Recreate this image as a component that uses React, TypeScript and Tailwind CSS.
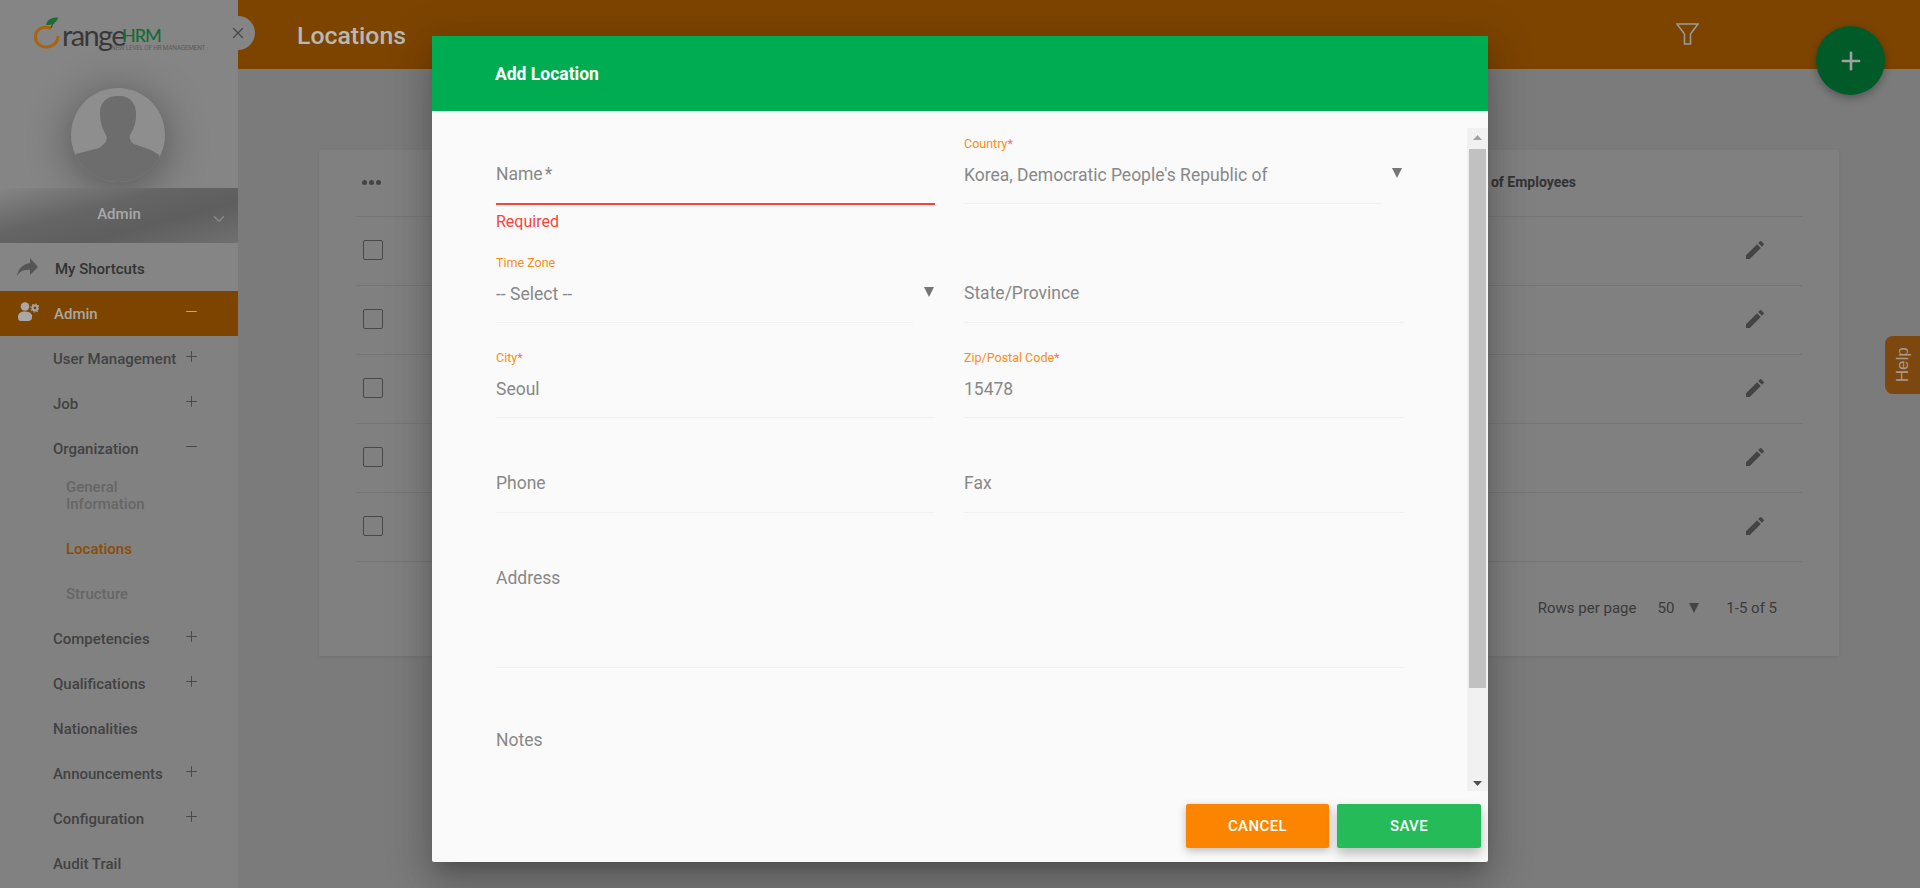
import type { ReactNode } from 'react';
import { Minus, Plus, X, ChevronDown } from 'lucide-react';
import { MdEdit } from 'react-icons/md';

function Logo() {
  return (
    <div className="relative h-[69px] w-full">
      <svg className="absolute left-[32px] top-[14px]" width="32" height="36" viewBox="0 0 32 36">
        <path d="M19 14.5 C12 11.5 3.5 14.5 3.5 23 C3.5 29.5 8.5 33 14.5 33 C21 33 26 28.5 26 22" fill="none" stroke="#a86510" strokeWidth="3" />
        <path d="M19 14 C19.5 11 20.5 9.5 22 8.5" fill="none" stroke="#4a4a3a" strokeWidth="1.5" />
        <path d="M14 11 C15 5 21 3 26 3.5 C25.5 8 20 11.5 14 11 Z" fill="#1d6b38" />
      </svg>
      <span className="absolute left-[62px] top-[25px] text-[29px] leading-[20px] tracking-[-1.6px] text-[#383838] font-['Lato',sans-serif]">range</span>
      <span className="absolute left-[122px] top-[28px] text-[18px] leading-[14px] tracking-[-1.1px] font-medium text-[#146b38] font-['Lato',sans-serif]">HRM</span>
      <span className="absolute left-[111px] top-[45px] text-[6.5px] leading-[6px] tracking-[-0.25px] whitespace-nowrap text-[#5c5c5c]">NEW LEVEL OF HR MANAGEMENT</span>
    </div>
  );
}

function Avatar() {
  return (
    <div className="flex h-[119px] justify-center pr-[2px] pt-[19px]">
      <div className="h-[94px] w-[94px] overflow-hidden rounded-full bg-[#8e8e8e] shadow-[0_6px_44px_rgba(0,0,0,0.38)]">
        <svg width="94" height="94" viewBox="0 0 94 94">
          <path
            d="M47 8 C58 7 66 15 65 28 C65 36 62 42 59 47 C58 51 60 54 63 56 L80 62 L88 67 L94 94 L0 94 L5 66 L28 60 C35 55 37 52 35 47 C32 42 29 35 29 25 C29 14 36 8 47 8 Z"
            fill="#6d6d6d"
          />
        </svg>
      </div>
    </div>
  );
}

function NavItem({ label, toggle }: { label: string; toggle?: 'plus' | 'minus' }) {
  return (
    <div className="flex h-[45px] items-center justify-between pl-[53px] pr-[38px] text-[15px] font-medium text-[#424242]">
      <span>{label}</span>
      {toggle === 'plus' && <Plus size={17} strokeWidth={1.4} className="mb-[7px] text-[#484848]" />}
      {toggle === 'minus' && <Minus size={17} strokeWidth={1.4} className="mb-[7px] text-[#484848]" />}
    </div>
  );
}

function Sidebar() {
  return (
    <aside className="flex h-full w-[238px] shrink-0 flex-col bg-[#818181]">
      <div className="bg-[#858585]">
        <Logo />
        <Avatar />
      </div>
      <div className="relative flex h-[55px] items-center justify-center bg-[linear-gradient(165deg,#858585_0%,#656565_38%,#5e5e5e_65%,#707070_100%)] pb-[3px] text-[15px] font-medium text-[#a9a9a9]">
        Admin
        <ChevronDown size={18} strokeWidth={2} className="absolute left-[210px] top-[22px] text-[#8a8a8a]" />
      </div>
      <div className="flex h-[48px] items-center bg-[#858585] pl-[17px] pt-[4px] text-[15px] font-medium text-[#333333]">
        <svg width="21" height="18" viewBox="0 0 21 18" className="mb-[5px]">
          <path d="M13 0 L21 9 L13 17 L13 12 C7 11 3 13 0 18 C1 11 6 6 13 5 Z" fill="#555555" />
        </svg>
        <span className="ml-[17px]">My Shortcuts</span>
      </div>
      <div className="flex h-[45px] items-center justify-between bg-[#7d4400] pl-[18px] pr-[38px] pt-[2px] text-[15px] font-medium text-[#a8a8a8]">
        <div className="flex items-center">
          <svg width="21" height="19" viewBox="0 0 21 19" className="mb-[6px]" fill="#a8a8a8">
            <circle cx="7" cy="4.5" r="4.3" />
            <path d="M0 15 C0 11 3 9.5 7 9.5 C10 9.5 13 10.5 14 13 L14 16 C14 18 12 19 10 19 L3 19 C1 19 0 18 0 15 Z" />
            <circle cx="17" cy="6" r="2.4" fill="none" stroke="#a8a8a8" strokeWidth="2" />
            <circle cx="17" cy="6" r="4" fill="none" stroke="#a8a8a8" strokeWidth="1.2" strokeDasharray="1.5 1.6" />
          </svg>
          <span className="ml-[15px]">Admin</span>
        </div>
        <Minus size={17} strokeWidth={1.6} className="mb-[7px]" />
      </div>
      <div className="h-px" />
      <NavItem label="User Management" toggle="plus" />
      <NavItem label="Job" toggle="plus" />
      <NavItem label="Organization" toggle="minus" />
      <div className="h-[55px] pb-[7px] pl-[66px] pt-[7px] text-[15px] font-medium leading-[17px] text-[#666666]">
        General
        <br />
        Information
      </div>
      <div className="flex h-[45px] items-center pl-[66px] text-[15px] font-medium text-[#8a4d06]">Locations</div>
      <div className="flex h-[45px] items-center pl-[66px] text-[15px] font-medium text-[#666666]">Structure</div>
      <NavItem label="Competencies" toggle="plus" />
      <NavItem label="Qualifications" toggle="plus" />
      <NavItem label="Nationalities" />
      <NavItem label="Announcements" toggle="plus" />
      <NavItem label="Configuration" toggle="plus" />
      <NavItem label="Audit Trail" />
    </aside>
  );
}

function TableRow() {
  return (
    <div className="flex h-[69px] items-center justify-between border-b border-[#757575] pb-[2px] pl-[7px] pr-[35px]">
      <div className="h-[20px] w-[20px] rounded-[2px] border border-[#484848]" />
      <MdEdit size={24} className="text-[#444444]" />
    </div>
  );
}

function LocationsTable() {
  return (
    <div className="bg-[#808080] px-[37px] shadow-[0_1px_3px_rgba(0,0,0,0.08)]">
      <div className="flex h-[67px] items-center justify-between border-b border-[#757575] pb-[2px] pl-[6px] pr-[226px]">
        <div className="flex gap-[2px]">
          <span className="h-[5px] w-[5px] rounded-full bg-[#444444]" />
          <span className="h-[5px] w-[5px] rounded-full bg-[#444444]" />
          <span className="h-[5px] w-[5px] rounded-full bg-[#444444]" />
        </div>
        <span className="text-[14px] font-bold text-[#333333]">No. of Employees</span>
      </div>
      <TableRow />
      <TableRow />
      <TableRow />
      <TableRow />
      <TableRow />
      <div className="flex h-[94px] items-center justify-end pb-[2px] pr-[25px] text-[15px] text-[#3a3a3a]">
        <span>Rows per page</span>
        <span className="ml-[21px]">50</span>
        <svg className="ml-[15px]" width="10" height="10" viewBox="0 0 10 10">
          <polygon points="0,0 10,0 5,10" fill="#444444" />
        </svg>
        <span className="ml-[27px]">1-5 of 5</span>
      </div>
    </div>
  );
}

function Arrow() {
  return (
    <svg className="mb-[26px] ml-[11px] self-end" width="10" height="10" viewBox="0 0 10 10">
      <polygon points="0,0 10,0 5,10" fill="#757575" />
    </svg>
  );
}

type FieldProps = { label?: string; value: ReactNode; star?: boolean; className?: string };

function Field({ label, value, star, className = 'h-[76px] border-b border-[#f0f0f0]' }: FieldProps) {
  return (
    <div className={`flex flex-col justify-end ${className}`}>
      {label ? (
        <>
          <div className="pb-[2px] text-[12.5px] leading-[14px] text-[#fb8c14]">
            {label}
            {star && <span className="text-[#fb6e6e]">*</span>}
          </div>
          <div className="mb-[6px] flex h-[44px] items-center text-[17.5px] text-[#888888]">{value}</div>
        </>
      ) : (
        <div className="mb-[7px] flex h-[44px] items-center text-[17.5px] text-[#888888]">{value}</div>
      )}
    </div>
  );
}

function ScrollTrack() {
  return (
    <div className="flex h-full w-[21px] shrink-0 flex-col items-center bg-[#f1f1f1]">
      <svg className="mt-[7px] shrink-0" width="9" height="5" viewBox="0 0 9 5">
        <polygon points="4.5,0 9,5 0,5" fill="#a3a3a3" />
      </svg>
      <div className="mt-[9px] h-[539px] w-[17px] bg-[#c1c1c1]" />
      <div className="flex-1" />
      <svg className="mb-[5px] shrink-0" width="9" height="5" viewBox="0 0 9 5">
        <polygon points="0,0 9,0 4.5,5" fill="#505050" />
      </svg>
    </div>
  );
}

function LocationForm() {
  return (
    <div className="grid flex-1 grid-cols-[439px_440px] grid-rows-[119px_95px_95px_95px_136px_150px] gap-x-[29px] overflow-hidden pl-[64px]">
      <div>
        <Field
          value={
            <>
              Name<span className="ml-[2px]">*</span>
            </>
          }
          className="h-[77px] border-b-2 border-[#f9433c]"
        />
        <div className="mt-[7px] text-[16px] leading-[20px] text-[#f9433c]">Required</div>
      </div>
      <div className="flex h-[76px] items-start self-start">
        <Field label="Country" star value="Korea, Democratic People's Republic of" className="h-[76px] w-[417px] border-b border-[#f0f0f0]" />
        <Arrow />
      </div>
      <div className="flex h-[76px] items-start self-start">
        <Field label="Time Zone" value="-- Select --" className="h-[76px] w-[417px] border-b border-[#f0f0f0]" />
        <Arrow />
      </div>
      <Field value="State/Province" />
      <Field label="City" star value="Seoul" />
      <Field label="Zip/Postal Code" star value="15478" />
      <Field value="Phone" />
      <Field value="Fax" />
      <div className="col-span-2 h-[136px] border-b border-[#f0f0f0] pt-[24px]">
        <div className="flex h-[44px] items-center text-[17.5px] text-[#888888]">Address</div>
      </div>
      <div className="col-span-2 pt-[50px]">
        <div className="flex h-[44px] items-center text-[17.5px] text-[#888888]">Notes</div>
      </div>
    </div>
  );
}

function AddLocationModal() {
  return (
    <div className="absolute left-[432px] top-[36px] flex h-[826px] w-[1056px] flex-col rounded-[2px] bg-[#fafafa] shadow-[0_24px_38px_3px_rgba(0,0,0,0.14),0_9px_46px_8px_rgba(0,0,0,0.12),0_11px_15px_-7px_rgba(0,0,0,0.2)]">
      <div className="flex h-[75px] shrink-0 items-center bg-[#00ac51] pl-[63px] pt-[2px] text-[17.5px] font-bold text-white">Add Location</div>
      <div className="mt-[17px] flex h-[663px] shrink-0">
        <LocationForm />
        <ScrollTrack />
      </div>
      <div className="flex flex-1 items-start justify-end gap-[8px] pr-[7px] pt-[13px] text-[15px] font-medium tracking-[0.4px] text-white">
        <button className="h-[44px] w-[143px] rounded-[2px] bg-[#fb8500] shadow-[0_3px_8px_rgba(0,0,0,0.25)]">CANCEL</button>
        <button className="h-[44px] w-[144px] rounded-[2px] bg-[#26bb59] shadow-[0_6px_12px_rgba(0,0,0,0.25)]">SAVE</button>
      </div>
    </div>
  );
}

export default function App() {
  return (
    <div className="relative flex h-[888px] overflow-hidden bg-[#7b7b7b] font-['Roboto',sans-serif]">
      <Sidebar />
      <main className="flex min-w-0 flex-1 flex-col">
        <header className="flex h-[69px] shrink-0 items-center justify-between bg-[#7d4400] pl-[59px] pr-[221px]">
          <h1 className="pt-[2px] text-[24.8px] font-medium text-[#b8b8b8]">Locations</h1>
          <svg className="mb-[2px]" width="23" height="22" viewBox="0 0 23 22">
            <path d="M1 1 H22 L14.5 11 V21 H8.5 V11 Z" fill="none" stroke="#9a9a9a" strokeWidth="1.5" />
          </svg>
        </header>
        <div className="px-[81px] pt-[81px]">
          <LocationsTable />
        </div>
      </main>

      <div className="absolute left-[221px] top-[16px] flex h-[34px] w-[34px] items-center justify-center rounded-full bg-[#858585]">
        <X size={18} strokeWidth={1.6} className="text-[#484848]" />
      </div>
      <div className="absolute left-[1816px] top-[26px] flex h-[69px] w-[69px] items-center justify-center rounded-full bg-[#005b28] shadow-[0_3px_8px_rgba(0,0,0,0.3)]">
        <Plus size={28} strokeWidth={2.2} className="text-[#a0a0a0]" />
      </div>
      <div className="absolute left-[1885px] top-[336px] flex h-[58px] w-[35px] items-center justify-center rounded-l-lg bg-[#7d480f]">
        <span className="-rotate-90 text-[17px] text-[#a8998a] font-['Liberation_Sans',sans-serif]">Help</span>
      </div>
      <AddLocationModal />
    </div>
  );
}
